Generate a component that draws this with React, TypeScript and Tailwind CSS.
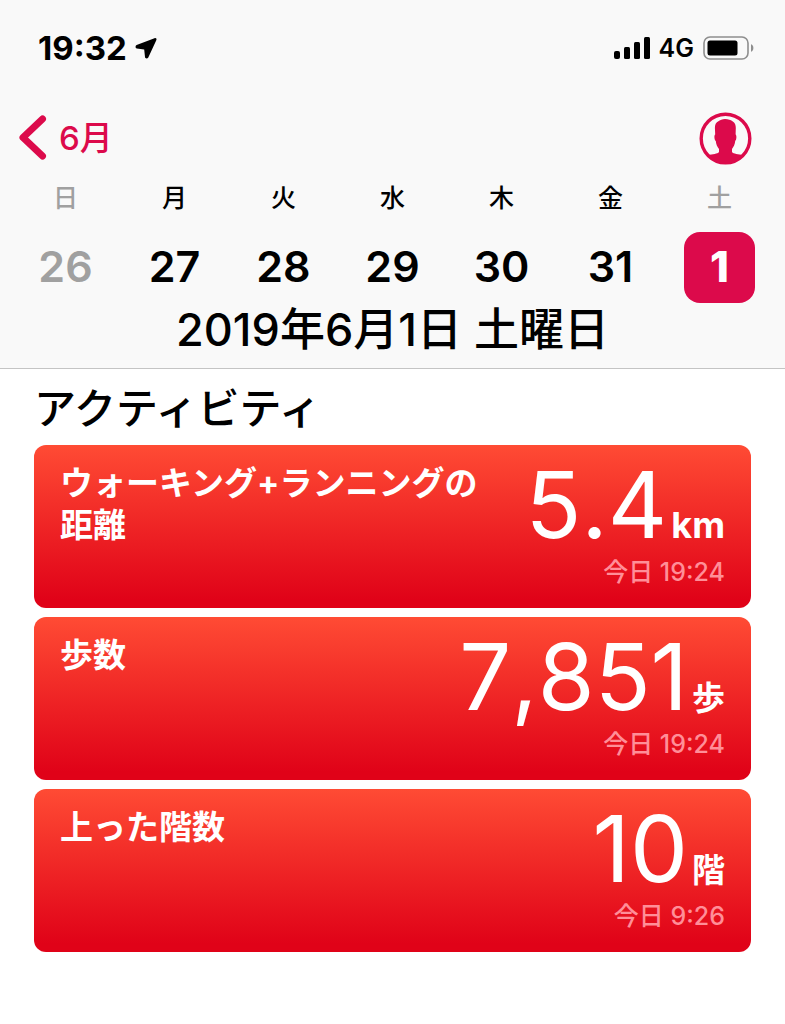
import React from 'react';

interface Day {
  weekday: string;
  date: number;
  weekend?: boolean;
  selected?: boolean;
}

interface Activity {
  label: string;
  value: string;
  unit: string;
  unitSize: string;
  time: string;
}

const days: Day[] = [
  { weekday: '日', date: 26, weekend: true },
  { weekday: '月', date: 27 },
  { weekday: '火', date: 28 },
  { weekday: '水', date: 29 },
  { weekday: '木', date: 30 },
  { weekday: '金', date: 31 },
  { weekday: '土', date: 1, weekend: true, selected: true },
];

const activities: Activity[] = [
  { label: 'ウォーキング+ランニングの距離', value: '5.4', unit: 'km', unitSize: 'text-4xl', time: '今日 19:24' },
  { label: '歩数', value: '7,851', unit: '歩', unitSize: 'text-[33px]', time: '今日 19:24' },
  { label: '上った階数', value: '10', unit: '階', unitSize: 'text-[33px]', time: '今日 9:26' },
];

const StatusBar = () => (
  <div className="flex h-24 items-center justify-between pl-[38px] pr-[31px]">
    <div className="flex items-center gap-2">
      <span className="text-[33px] font-bold leading-9">19:32</span>
      <svg className="h-[22px] w-[22px]" viewBox="0 0 22 22" aria-hidden="true">
        <path
          d="M19.500 1.200 1.600 8 C.1 8.700 .2 11.200 1.800 11.400 L9.200 12.600 10 20 C10.200 21.800 12.400 21.900 13.300 20.400 L21.400 3 C21.900 1.600 20.900 .7 19.500 1.200Z"
          fill="#000"
        />
      </svg>
    </div>
    <div className="flex items-center gap-[9px]">
      <svg className="h-6 w-9" viewBox="0 0 36 24" aria-hidden="true">
        <rect x="0" y="15" width="6" height="8" rx="2" />
        <rect x="10" y="11" width="6" height="12" rx="1.5" />
        <rect x="20" y="6" width="6" height="17" rx="1.5" />
        <rect x="30" y="1" width="6" height="22" rx="1.5" />
      </svg>
      <span className="text-[25px] font-semibold leading-9">4G</span>
      <svg className="h-6 w-[51px]" viewBox="0 0 51 24" aria-hidden="true">
        <rect x="1" y="1" width="44" height="22" rx="6" fill="none" stroke="#8e8e8e" strokeWidth="1.6" />
        <rect x="4.500" y="4.500" width="30" height="15" rx="2.500" fill="#000" />
        <path d="M48 8.300 C51.200 9.300 51.200 14.700 48 15.700Z" fill="#8e8e8e" />
      </svg>
    </div>
  </div>
);

const NavBar = () => (
  <div className="flex h-[84px] items-center justify-between pl-[18px] pr-[33px]">
    <button type="button" className="flex items-center gap-3 text-[#dc0a4b]">
      <svg className="h-[46px] w-[29px]" viewBox="0 0 29 46" fill="none" aria-hidden="true">
        <path d="M24.500 4 5 22.500 24.500 41" stroke="currentColor" strokeWidth="7" strokeLinecap="round" strokeLinejoin="round" />
      </svg>
      <span className="text-[33px] font-medium leading-10">6月</span>
    </button>
    <button type="button" aria-label="プロフィール" className="text-[#dc0a4b]">
      <svg className="h-[53px] w-[53px]" viewBox="0 0 53 53" aria-hidden="true">
        <circle cx="26.500" cy="26.500" r="24.300" fill="none" stroke="currentColor" strokeWidth="3.400" />
        <path
          d="M26 7 C29.500 7 31.500 8 33.500 9.200 C36 10.500 36.800 13 36.800 16 L36.600 22.500 C37.900 23.200 37.500 28 36.200 29 C36 32 34.500 35 33 37 L33 40 C34.500 42 39 42 44.500 43.200 C35.500 55 17.500 55 8.500 43.200 C14 42 18.500 42 20 40 L20 37 C18.300 35 17 32 16.800 29 C15.300 28 14.900 23.200 16.200 22.500 L15.900 16 C15.900 12.500 17 10.500 19 9.500 C21 8 23.500 7 26 7Z"
          fill="currentColor"
        />
      </svg>
    </button>
  </div>
);

const DayColumn = ({ day }: { day: Day }) => (
  <div className="flex flex-col items-center">
    <span className={`text-[25px] font-medium leading-9 ${day.weekend ? 'text-[#a0a0a0]' : ''}`}>
      {day.weekday}
    </span>
    <button
      type="button"
      aria-pressed={!!day.selected}
      className={`mt-4 flex h-[71px] w-[71px] items-center justify-center rounded-2xl pb-1 text-[43px] leading-[50px] ${
        day.selected
          ? 'bg-[#dc0a4b] font-extrabold text-white'
          : day.weekend
            ? 'font-semibold text-[#a0a0a0]'
            : 'font-semibold'
      }`}
    >
      {day.date}
    </button>
  </div>
);

const ActivityCard = ({ activity }: { activity: Activity }) => (
  <article className="flex h-[163px] justify-between rounded-xl bg-linear-to-b/srgb from-[#ff4b34] to-[#e00218] to-95% px-[26px] text-white">
    <h3 className="max-w-[430px] pt-[17px] text-[33px] font-bold leading-[42px]">{activity.label}</h3>
    <div className="flex flex-col items-end whitespace-nowrap pt-3">
      <p className="flex items-baseline gap-1">
        <span className="text-[92px] leading-[96px] [font-kerning:none]">{activity.value}</span>
        <span className={`${activity.unitSize} font-bold leading-9`}>{activity.unit}</span>
      </p>
      <p className="text-[25px] font-medium leading-[38px] text-[#ff8e98]">{activity.time}</p>
    </div>
  </article>
);

export default function App() {
  return (
    <div className="min-h-screen bg-white font-['Inter','Noto_Sans_CJK_JP',sans-serif] text-black" lang="ja">
      <header className="border-b border-[#c4c4c4] bg-[#f9f9f9]">
        <StatusBar />
        <NavBar />
        <div className="grid grid-cols-7 px-[11px]">
          {days.map((day) => (
            <DayColumn key={day.date} day={day} />
          ))}
        </div>
        <h1 className="pb-[11px] text-center text-[45px] font-medium leading-[54px]">2019年6月1日 土曜日</h1>
      </header>

      <main className="px-[34px] pt-3">
        <h2 className="text-[42px] font-medium leading-[56px]">アクティビティ</h2>
        <div className="mt-2 flex flex-col gap-[9px]">
          {activities.map((activity) => (
            <ActivityCard key={activity.label} activity={activity} />
          ))}
        </div>
      </main>
    </div>
  );
}
